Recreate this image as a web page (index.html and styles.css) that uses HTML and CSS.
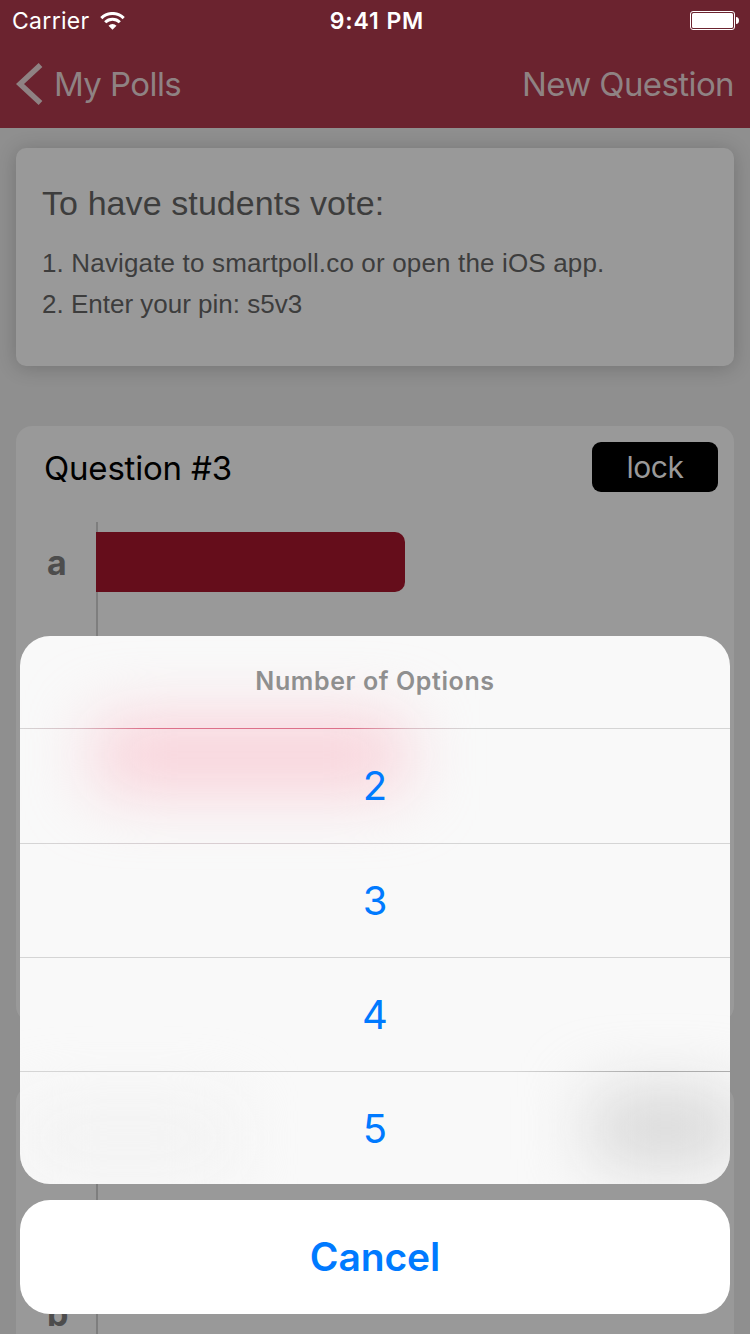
FILE: index.html
```html
<!DOCTYPE html>
<html lang="en">
<head>
<meta charset="utf-8">
<title>My Polls</title>
<link rel="stylesheet" href="styles.css">
</head>
<body>
<div class="screen">
  <header class="header">
    <div class="status">
      <div class="carrier">
        <span class="carrier-name">Carrier</span>
        <svg class="wifi" width="25" height="18" viewBox="0 0 25 18">
          <path d="M1.300 6.100a15.800 15.800 0 0 1 22.400 0M5.200 10.200a10.300 10.300 0 0 1 14.600 0" fill="none" stroke="#fff" stroke-width="3"/>
          <path d="M8.500 13.700a5.700 5.700 0 0 1 8 0L12.500 17.800z" fill="#fff"/>
        </svg>
      </div>
      <span class="clock">9:41 PM</span>
      <svg class="battery" width="50" height="20" viewBox="0 0 50 20">
        <rect x=".5" y=".5" width="44" height="18" rx="2.500" fill="none" stroke="#fff"/>
        <rect x="2" y="2" width="41" height="15" rx="1.500" fill="#fff"/>
        <path d="M46 6c2 0 3 1.500 3 3.500s-1 3.500-3 3.500z" fill="#fff"/>
      </svg>
    </div>
    <nav class="nav">
      <a class="back">
        <svg class="chevron" width="28" height="44" viewBox="0 0 28 44"><path d="M24.500 3L4 22L24.500 41" fill="none" stroke="currentColor" stroke-width="5.500"/></svg>
        <span class="back-label">My Polls</span>
      </a>
      <a class="new-question">New Question</a>
    </nav>
  </header>
  <main class="content">
    <section class="card info">
      <h1 class="info-title">To have students vote:</h1>
      <p class="info-line step-one">1. Navigate to smartpoll.co or open the iOS app.</p>
      <p class="info-line step-two">2. Enter your pin: s5v3</p>
    </section>
    <section class="card question">
      <div class="question-head">
        <h2 class="question-title">Question #3</h2>
        <button class="lock">lock</button>
      </div>
      <div class="chart">
        <div class="labels"><span class="label">a</span></div>
        <div class="plot"><div class="bar"></div></div>
      </div>
    </section>
    <section class="card question next">
      <div class="chart">
        <div class="labels"><span class="label">b</span></div>
        <div class="plot"></div>
      </div>
    </section>
  </main>
  <div class="sheet">
    <div class="options">
      <div class="glow glow-bar"></div>
      <div class="glow glow-lock"></div>
      <div class="glow glow-text"></div>
      <div class="sheet-title"><span class="sheet-title-text">Number of Options</span></div>
      <div class="option option-red">2</div>
      <div class="option option-pale">3</div>
      <div class="option">4</div>
      <div class="option option-dark">5</div>
    </div>
    <div class="cancel"><span class="cancel-text">Cancel</span></div>
  </div>
</div>
</body>
</html>
```
FILE: styles.css
```css
* { box-sizing: border-box; margin: 0; padding: 0; }
body { font-family: Inter, "Noto Sans", sans-serif; }
.screen { position: relative; width: 750px; height: 1334px; overflow: hidden; background: #8f8f8f; }

.header { height: 128px; background: #6b232f; }
.status { display: grid; grid-template-columns: 1fr auto 1fr; height: 40px; padding: 1px 10px 0 12px; align-items: center; color: #fff; }
.carrier { display: flex; align-items: center; gap: 10px; }
.carrier-name { font-size: 23px; letter-spacing: 0.3px; }
.clock { font-size: 23px; font-weight: 600; letter-spacing: 0.9px; padding-left: 2px; }
.battery { justify-self: end; }
.nav { display: flex; justify-content: space-between; align-items: center; height: 88px; padding: 0 16px 0 16px; color: #8f8283; font-size: 33px; font-weight: 400; letter-spacing: -0.6px; }
.back { display: flex; align-items: center; gap: 10px; }

.content { display: flex; flex-direction: column; padding: 20px 16px 0; }
.card { flex: none; background: #999; border-radius: 16px; }
.info { height: 218px; padding: 35px 26px; border-radius: 10px; box-shadow: 0 2px 20px rgba(0, 0, 0, .2); color: #3d3d3d; font-family: "Liberation Sans", Arial, sans-serif; }
.info-title { font-size: 34px; font-weight: 400; line-height: 40px; letter-spacing: 0.09px; }
.info-line { font-size: 26px; line-height: 41px; }
.step-one { margin-top: 20px; letter-spacing: 0.155px; }
.question { height: 596px; margin-top: 60px; }
.question-head { display: flex; justify-content: space-between; align-items: center; padding: 16px 16px 0 28px; }
.question-title { padding-top: 2px; font-size: 33px; font-weight: 400; letter-spacing: -0.2px; color: #000; }
.lock { width: 126px; height: 50px; border: 0; border-radius: 9px; background: #000; color: #999; font: 400 30px Inter, sans-serif; letter-spacing: -0.5px; }
.chart { display: flex; height: 470px; margin-top: 30px; }
.labels { width: 80px; padding: 19px 0 0 31px; }
.label { font-size: 34px; font-weight: 700; color: #4d4d4d; line-height: 44px; }
.plot { flex: 1; padding-top: 10px; border-left: 2px solid #7e7e7e; }
.bar { width: 309px; height: 60px; margin-left: -2px; border-radius: 0 10px 10px 0; background: #650d1b; }
.next { margin-top: 64px; }
.next .chart { margin-top: 96px; }
.next .labels { padding-top: 110px; }

.sheet { position: absolute; left: 20px; right: 20px; bottom: 20px; display: flex; flex-direction: column; gap: 16px; }
.options { position: relative; height: 548px; overflow: hidden; border-radius: 30px; background: #f9f9f9; }
.glow { position: absolute; filter: blur(34px); }
.glow-bar { left: 76px; top: 86px; width: 309px; height: 66px; background: #f9ccd5; }
.glow-lock { left: 572px; top: 459px; width: 148px; height: 66px; background: #d3d3d3; }
.glow-text { left: 5px; top: 472px; width: 207px; height: 60px; background: #f1f1f1; }
.sheet-title, .option { position: relative; display: flex; align-items: center; justify-content: center; }
.sheet-title { height: 92px; padding-bottom: 2px; color: #8f8f8f; font-size: 25px; font-weight: 600; letter-spacing: 0.6px; }
.option { height: 114px; padding-bottom: 1px; border-top: 1px solid #d5d5d5; color: #007aff; font-size: 40px; font-weight: 400; }
.option-red { height: 115px; border-image: linear-gradient(90deg, #d5d5d5 0, #d9bdc4 60px, #dd708a 125px, #dd708a 330px, #d9bdc4 390px, #d5d5d5 450px) 1; }
.option-pale { border-image: linear-gradient(90deg, #d5d5d5, #d9cdd1 210px, #d5d5d5 440px) 1; }
.option-dark { border-image: linear-gradient(90deg, #d5d5d5 490px, #ababab 630px, #adadad) 1; }
.cancel { display: flex; align-items: center; justify-content: center; height: 114px; padding-bottom: 2px; border-radius: 30px; background: #fff; color: #007aff; font-size: 39px; font-weight: 600; letter-spacing: -0.1px; }
```
